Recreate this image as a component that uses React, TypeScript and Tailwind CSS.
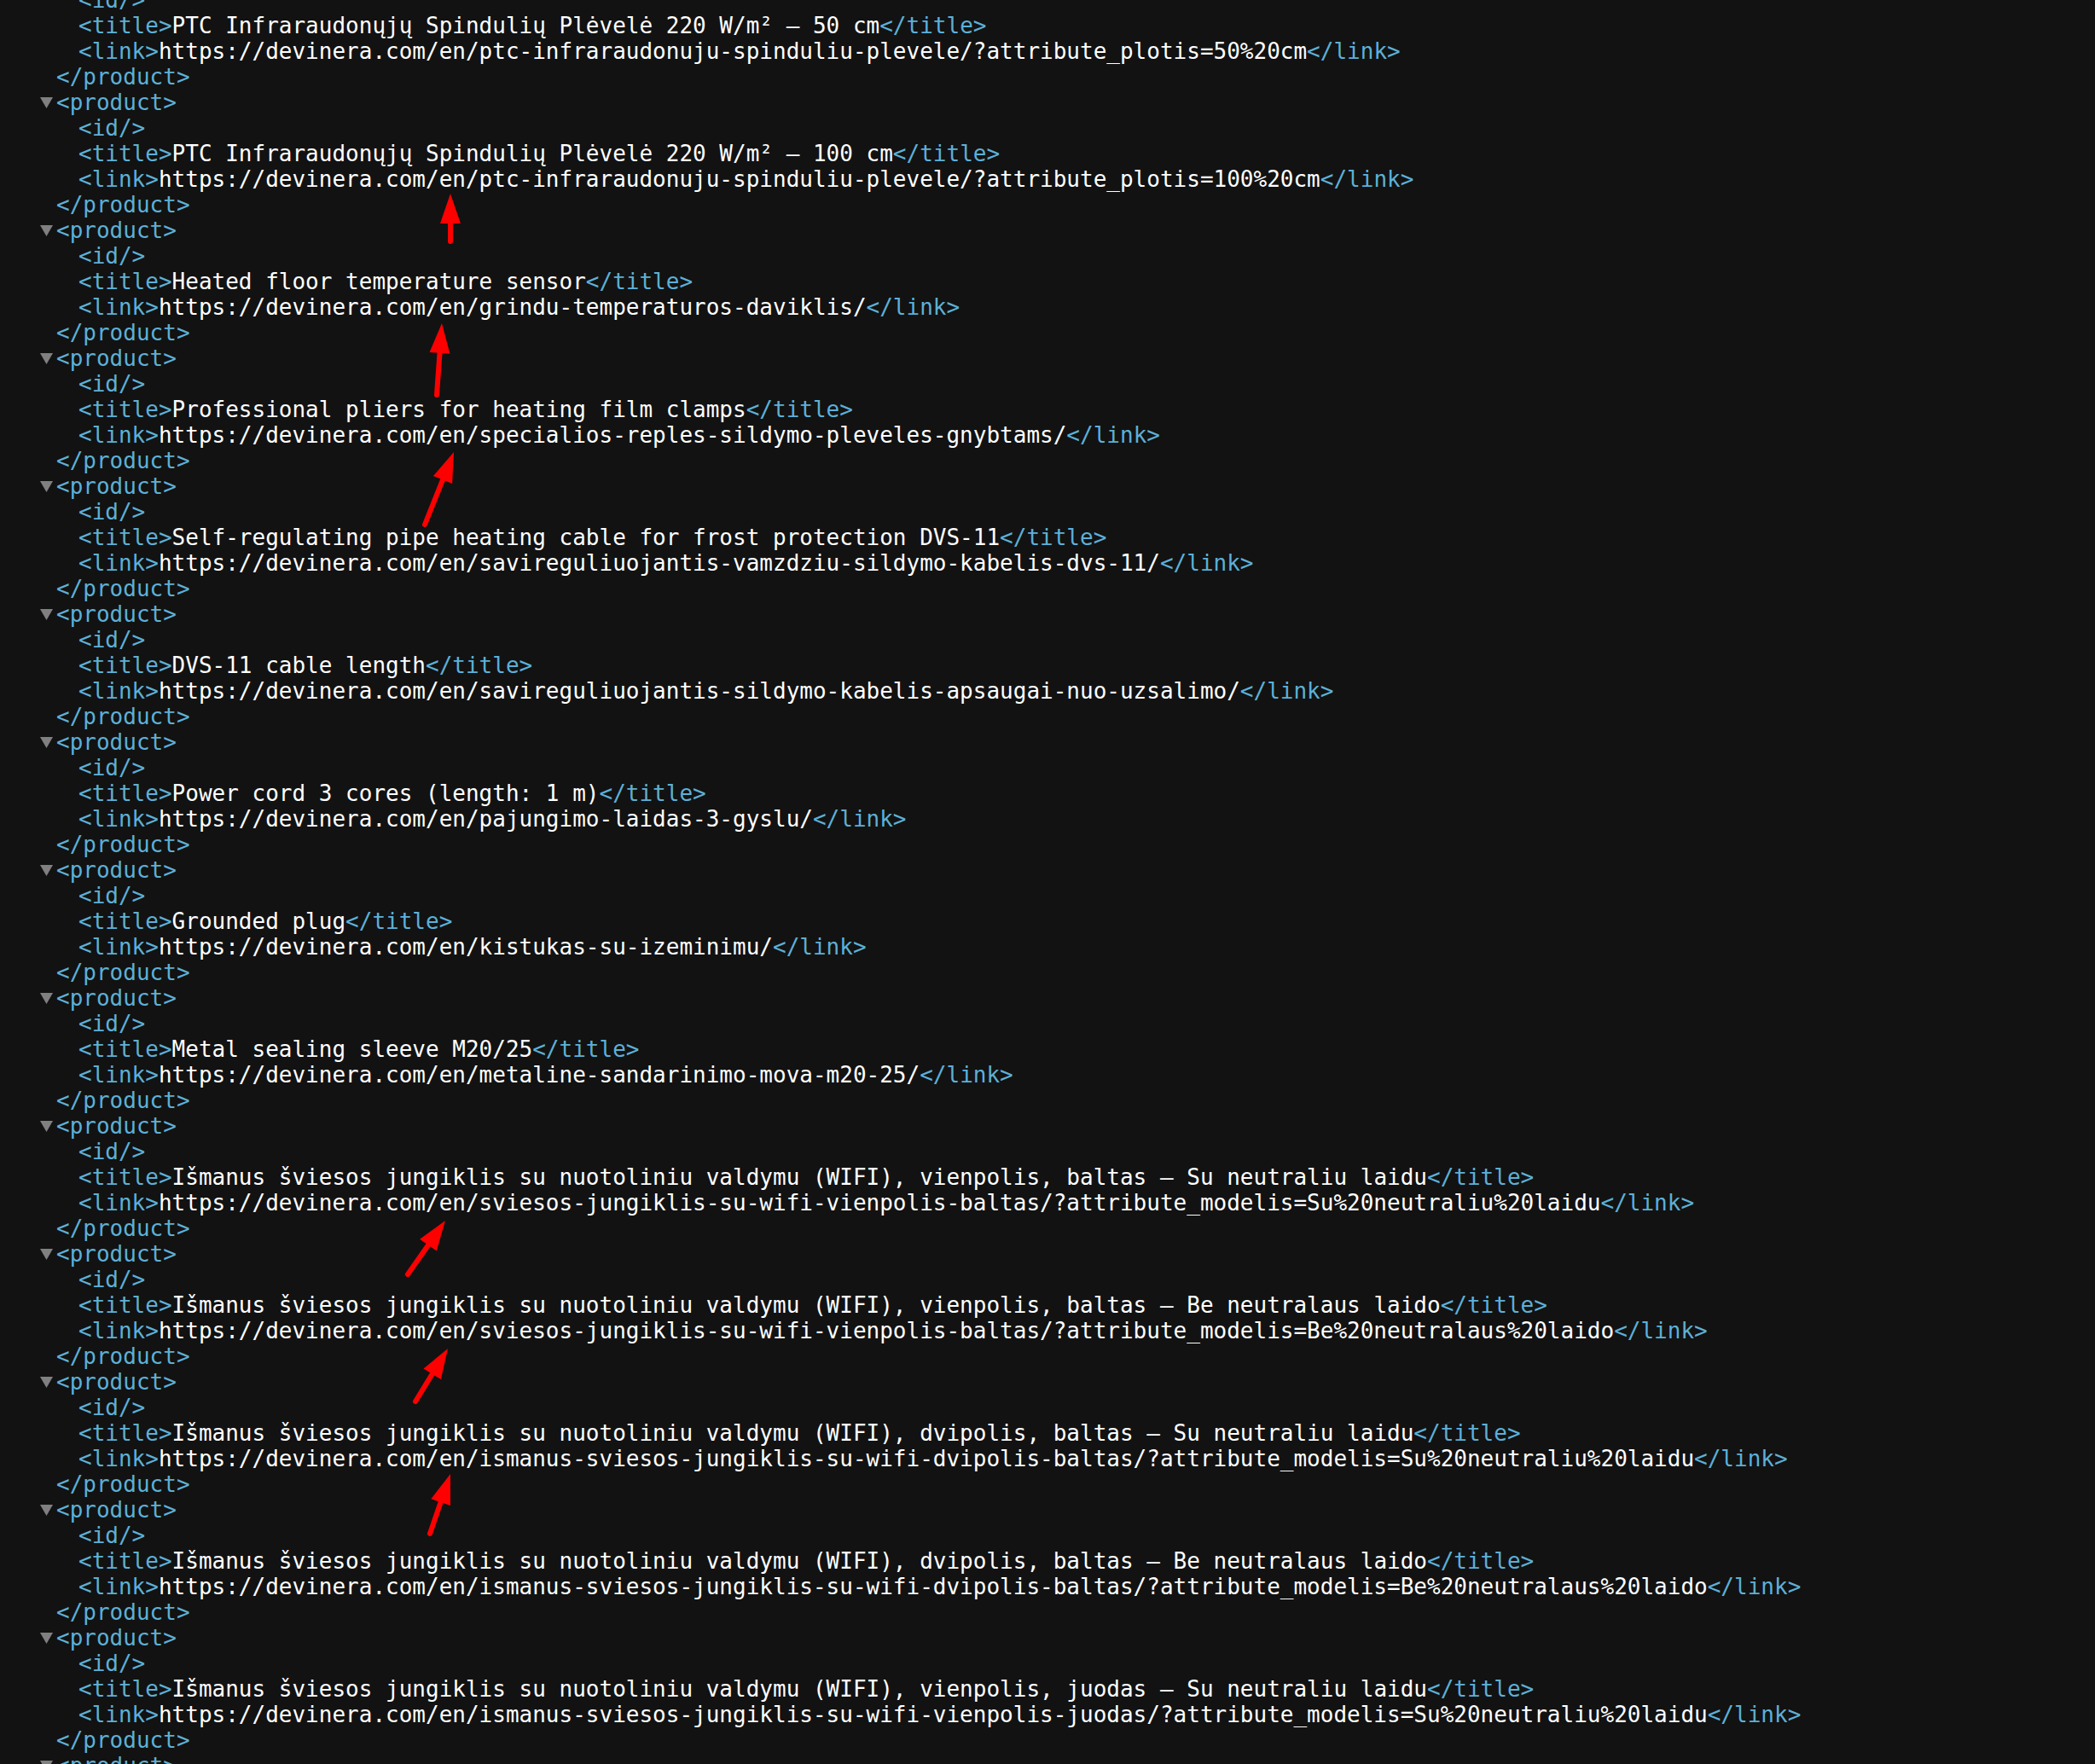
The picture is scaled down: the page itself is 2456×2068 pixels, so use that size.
import React from "react";

type Item = { title: string; link: string };

const W = "Išmanus šviesos jungiklis su nuotoliniu valdymu (WIFI)";
const B = "https://devinera.com/en/";

const items: Item[] = [
  { title: "PTC Infraraudonųjų Spindulių Plėvelė 220 W/m² – 100 cm", link: B + "ptc-infraraudonuju-spinduliu-plevele/?attribute_plotis=100%20cm" },
  { title: "Heated floor temperature sensor", link: B + "grindu-temperaturos-daviklis/" },
  { title: "Professional pliers for heating film clamps", link: B + "specialios-reples-sildymo-pleveles-gnybtams/" },
  { title: "Self-regulating pipe heating cable for frost protection DVS-11", link: B + "savireguliuojantis-vamzdziu-sildymo-kabelis-dvs-11/" },
  { title: "DVS-11 cable length", link: B + "savireguliuojantis-sildymo-kabelis-apsaugai-nuo-uzsalimo/" },
  { title: "Power cord 3 cores (length: 1 m)", link: B + "pajungimo-laidas-3-gyslu/" },
  { title: "Grounded plug", link: B + "kistukas-su-izeminimu/" },
  { title: "Metal sealing sleeve M20/25", link: B + "metaline-sandarinimo-mova-m20-25/" },
  { title: W + ", vienpolis, baltas – Su neutraliu laidu", link: B + "sviesos-jungiklis-su-wifi-vienpolis-baltas/?attribute_modelis=Su%20neutraliu%20laidu" },
  { title: W + ", vienpolis, baltas – Be neutralaus laido", link: B + "sviesos-jungiklis-su-wifi-vienpolis-baltas/?attribute_modelis=Be%20neutralaus%20laido" },
  { title: W + ", dvipolis, baltas – Su neutraliu laidu", link: B + "ismanus-sviesos-jungiklis-su-wifi-dvipolis-baltas/?attribute_modelis=Su%20neutraliu%20laidu" },
  { title: W + ", dvipolis, baltas – Be neutralaus laido", link: B + "ismanus-sviesos-jungiklis-su-wifi-dvipolis-baltas/?attribute_modelis=Be%20neutralaus%20laido" },
  { title: W + ", vienpolis, juodas – Su neutraliu laidu", link: B + "ismanus-sviesos-jungiklis-su-wifi-vienpolis-juodas/?attribute_modelis=Su%20neutraliu%20laidu" },
];

const Tag = ({ children }: { children: React.ReactNode }) => (
  <span className="text-[#5db0d7]">{children}</span>
);

const Child = ({ children }: { children: React.ReactNode }) => (
  <div className="pl-[92px] h-[30px] whitespace-pre">{children}</div>
);

const Triangle = () => (
  <svg width="15" height="14" viewBox="0 0 15 14" className="mr-[4px] shrink-0">
    <polygon points="0,1 15,1 7.5,14" fill="#808080" />
  </svg>
);

const Open = () => (
  <div className="pl-[47px] h-[30px] flex items-center whitespace-pre">
    <Triangle />
    <Tag>{"<product>"}</Tag>
  </div>
);

const Close = () => (
  <div className="pl-[66px] h-[30px] whitespace-pre">
    <Tag>{"</product>"}</Tag>
  </div>
);

const Body = ({ item }: { item: Item }) => (
  <>
    <Child>
      <Tag>{"<id/>"}</Tag>
    </Child>
    <Child>
      <Tag>{"<title>"}</Tag>
      {item.title}
      <Tag>{"</title>"}</Tag>
    </Child>
    <Child>
      <Tag>{"<link>"}</Tag>
      {item.link}
      <Tag>{"</link>"}</Tag>
    </Child>
  </>
);

const arrows: [number, number, number, number][] = [
  [528, 283, 528, 227],
  [512, 463, 518, 379],
  [498, 615, 532, 530],
  [478, 1494, 522, 1431],
  [487, 1643, 525, 1581],
  [504, 1798, 528, 1728],
];

function Arrow({ a }: { a: [number, number, number, number] }) {
  const [x1, y1, x2, y2] = a;
  const dx = x2 - x1;
  const dy = y2 - y1;
  const len = Math.hypot(dx, dy);
  const ux = dx / len;
  const uy = dy / len;
  const hl = 35;
  const hw = 12;
  const bx = x2 - ux * hl;
  const by = y2 - uy * hl;
  const px = -uy;
  const py = ux;
  const pts = `${x2},${y2} ${bx + px * hw},${by + py * hw} ${bx - px * hw},${by - py * hw}`;
  return (
    <g>
      <line x1={x1} y1={y1} x2={bx + ux * 4} y2={by + uy * 4} stroke="#ff0000" strokeWidth={6} strokeLinecap="round" />
      <polygon points={pts} fill="#ff0000" />
    </g>
  );
}

export default function App() {
  return (
    <div
      className="relative w-full h-[2068px] overflow-hidden bg-[#121212] text-white text-[26px] leading-[30px]"
      style={{ fontFamily: '"DejaVu Sans Mono", monospace' }}
    >
      <div className="-mt-[15px]">
        <Body item={{ title: "PTC Infraraudonųjų Spindulių Plėvelė 220 W/m² – 50 cm", link: B + "ptc-infraraudonuju-spinduliu-plevele/?attribute_plotis=50%20cm" }} />
        <Close />
        {items.map((it, i) => (
          <React.Fragment key={i}>
            <Open />
            <Body item={it} />
            <Close />
          </React.Fragment>
        ))}
        <Open />
        <Child>
          <Tag>{"<id/>"}</Tag>
        </Child>
      </div>
      <svg className="absolute inset-0 pointer-events-none" width="2456" height="2068">
        {arrows.map((a, i) => (
          <Arrow key={i} a={a} />
        ))}
      </svg>
    </div>
  );
}
